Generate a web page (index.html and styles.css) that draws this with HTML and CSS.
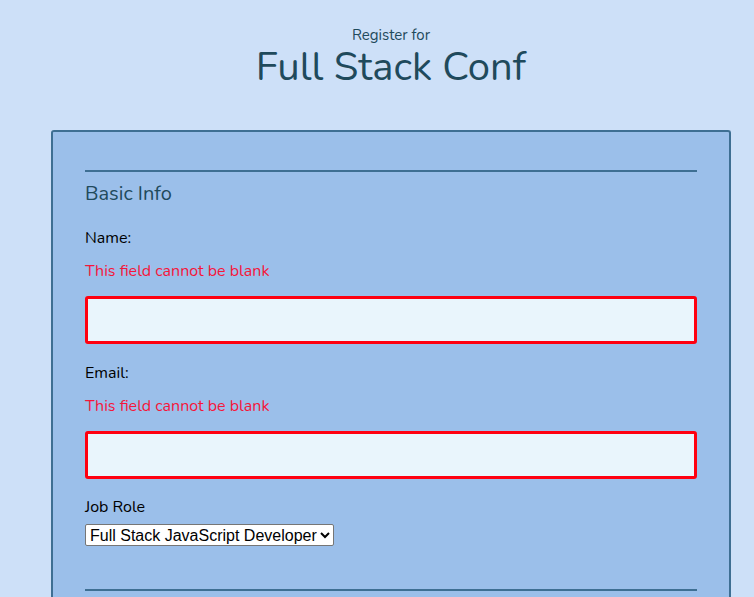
FILE: index.html
```html
<!DOCTYPE html>
<html>
<head>
<meta charset="utf-8">
<link rel="stylesheet" href="styles.css">
</head>
<body>
<div class="page">
  <header class="header">
    <div class="sub">Register for</div>
    <h1 class="title">Full Stack Conf</h1>
  </header>
  <form class="card">
    <fieldset class="section">
      <legend class="legend">Basic Info</legend>
      <label class="label first">Name:</label>
      <div class="error">This field cannot be blank</div>
      <input class="field" type="text">
      <label class="label">Email:</label>
      <div class="error">This field cannot be blank</div>
      <input class="field" type="text">
      <label class="label job">Job Role</label>
      <select class="select">
        <option>Full Stack JavaScript Developer</option>
      </select>
    </fieldset>
    <div class="rule"></div>
  </form>
</div>
</body>
</html>
```

FILE: styles.css
```css
html, body {
  margin: 0;
  padding: 0;
  background: #cde0f8;
  font-family: "Nunito", "Lato", "Open Sans", sans-serif;
}
.page {
  width: 680px;
  margin-left: 51px;
}
.header {
  text-align: center;
  color: #1f4a5c;
  padding-top: 25px;
}
.sub {
  font-size: 15px;
  line-height: 20px;
}
.title {
  margin: 0;
  font-size: 40px;
  font-weight: 400;
  line-height: 44px;
}
.card {
  margin-top: 41px;
  background: #9bbfea;
  border: 2px solid #3e6f93;
  border-bottom: none;
  border-radius: 3px 3px 0 0;
  padding: 38px 32px 0;
  height: 467px;
  box-sizing: border-box;
  overflow: hidden;
}
.section {
  border: none;
  border-top: 2px solid #3e6f93;
  margin: 0;
  padding: 0;
  display: flex;
  flex-direction: column;
}
.legend {
  display: none;
}
.section::before {
  content: "Basic Info";
  font-size: 20px;
  color: #1f4a5c;
  margin-top: 10px;
  line-height: 24px;
}
.label {
  font-size: 16px;
  color: #000;
  margin-top: 20px;
  line-height: 18px;
}
.label.first {
  margin-top: 23px;
}
.error {
  color: #f5163a;
  font-size: 16px;
  margin-top: 15px;
  line-height: 18px;
}
.field {
  margin-top: 16px;
  height: 48px;
  box-sizing: border-box;
  border: 3px solid #ff0010;
  border-radius: 3px;
  background: #e9f5fc;
  width: 100%;
}
.field + .label {
  margin-top: 20px;
}
.label.job {
  margin-top: 19px;
}
.select {
  align-self: flex-start;
  margin-top: 8px;
  font-family: "Liberation Sans", Arial, sans-serif;
  font-size: 16px;
  height: 22px;
  background: #fff;
  color: #000;
  border: 1px solid #767676;
  border-radius: 2px;
}
.rule {
  margin-top: 43px;
  border-top: 2px solid #3e6f93;
}
```
